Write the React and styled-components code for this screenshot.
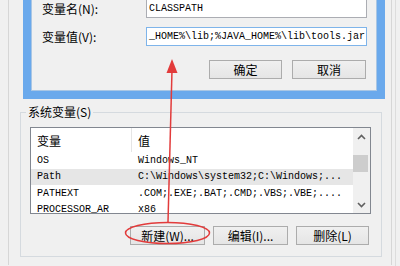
import React from "react";
import styled, { createGlobalStyle } from "styled-components";

const GlobalStyle = createGlobalStyle`
	html, body {
		margin: 0;
		padding: 0;
		background: #f0f0f0;
	}
	body {
		font-family: "Noto Sans CJK SC", "Liberation Sans", sans-serif;
		color: #000;
	}
`;

const Desktop = styled.div`
	position: relative;
	box-sizing: border-box;
	width: 396px;
	height: 266px;
	padding-left: 8px;
	border-right: 1px solid #dcdcdc;
	background: #f0f0f0;
	overflow: hidden;
`;

const EnvWindow = styled.div`
	box-sizing: border-box;
	width: 384px;
	height: 100%;
	border-left: 1px solid #d6d6d6;
	border-right: 1px solid #d6d6d6;
	background: #f0f0f0;
`;

const EditDialog = styled.div`
	box-sizing: border-box;
	width: 362px;
	margin: -1px 0 0 14px;
	border: 8px solid #6aa9ec;
	border-top: none;
	box-shadow: inset 0 0 0 1px #a9c6e4;
	background: #f0f0f0;
	padding: 0 10px 12px 11px;
`;

const FieldGrid = styled.div`
	display: grid;
	grid-template-columns: 104px 1fr;
	row-gap: 9px;
	align-items: center;
`;

const Label = styled.span`
	font-size: 12px;
	line-height: 16px;
	white-space: nowrap;
`;

const TextBox = styled.div`
	box-sizing: border-box;
	height: 19px;
	display: flex;
	align-items: center;
	padding: 0 2px;
	overflow: hidden;
	background: #fff;
	border: 1px solid ${(p) => (p.$focused ? "#7eb4ea" : "#abadb3")};
	font-family: "Liberation Mono", monospace;
	font-size: 10px;
	white-space: nowrap;
`;

const ButtonRow = styled.div`
	display: flex;
	justify-content: flex-end;
	gap: ${(p) => p.$gap || 8}px;
	margin-top: ${(p) => p.$top || 0}px;
	padding-right: ${(p) => p.$right || 0}px;
`;

const Button = styled.button`
	box-sizing: border-box;
	width: ${(p) => p.$w}px;
	height: 19px;
	padding: 0;
	border: 1px solid #acacac;
	background: linear-gradient(#f0f0f0, #e5e5e5);
	font-family: "Noto Sans CJK SC", "Liberation Sans", sans-serif;
	font-size: 12px;
	line-height: 17px;
	color: #000;
	white-space: nowrap;
`;

const GroupBox = styled.fieldset`
	box-sizing: border-box;
	width: 362px;
	margin: 5px 0 0 11px;
	padding: 7px 10px 11px 9px;
	border: 1px solid #d5dadf;
	min-width: 0;
`;

const GroupTitle = styled.legend`
	margin-left: -4px;
	padding: 0 2px;
	font-size: 12px;
	line-height: 16px;
`;

const ListView = styled.div`
	box-sizing: border-box;
	height: 87px;
	display: flex;
	border: 1px solid #828790;
	background: #fff;
	overflow: hidden;
`;

const Table = styled.div`
	flex: 1;
	display: flex;
	flex-direction: column;
`;

const HeaderRow = styled.div`
	display: grid;
	grid-template-columns: 101px 1fr;
	height: 24px;
	flex: none;
	font-size: 12px;
`;

const HeaderCell = styled.div`
	display: flex;
	align-items: center;
	padding-left: 6px;
	border-right: ${(p) => (p.$divider ? "1px solid #e5e5e5" : "none")};
`;

const Row = styled.div`
	display: grid;
	grid-template-columns: 101px 1fr;
	height: 16.5px;
	flex: none;
	align-items: center;
	background: ${(p) => (p.$selected ? "#e6e6e6" : "transparent")};
	font-family: "Liberation Mono", monospace;
	font-size: 10px;
	white-space: nowrap;
	overflow: hidden;
`;

const Cell = styled.span`
	padding-left: 6px;
	overflow: hidden;
`;

const ScrollBar = styled.div`
	width: 17px;
	flex: none;
	display: flex;
	flex-direction: column;
	align-items: center;
	background: #f0f0f0;
`;

const ScrollArrow = styled.div`
	height: 17px;
	width: 17px;
	display: flex;
	align-items: center;
	justify-content: center;
	flex: none;
`;

const ScrollTrack = styled.div`
	flex: 1;
	width: 100%;
	padding-top: 10px;
	box-sizing: border-box;
`;

const Thumb = styled.div`
	width: 15px;
	height: 17px;
	background: #cdcdcd;
`;

const Annotation = styled.svg`
	position: absolute;
	left: 0;
	top: 0;
	pointer-events: none;
`;

const Chevron = ({ down }) => (
	<svg width="9" height="6" viewBox="0 0 9 6">
		<path
			d={down ? "M1 1 L4.5 4.5 L8 1" : "M1 5 L4.5 1.5 L8 5"}
			fill="none"
			stroke="#606060"
			strokeWidth="1.6"
		/>
	</svg>
);

const rows = [
	["OS", "Windows_NT"],
	["Path", "C:\\Windows\\system32;C:\\Windows;..."],
	["PATHEXT", ".COM;.EXE;.BAT;.CMD;.VBS;.VBE;...."],
	["PROCESSOR_AR", "x86"],
];

const App = () => {
	return (
		<>
			<GlobalStyle />
			<Desktop>
				<EnvWindow>
					<EditDialog>
						<FieldGrid>
							<Label>变量名(N):</Label>
							<TextBox>CLASSPATH</TextBox>
							<Label>变量值(V):</Label>
							<TextBox $focused>{"_HOME%\\lib;%JAVA_HOME%\\lib\\tools.jar"}</TextBox>
						</FieldGrid>
						<ButtonRow $gap={10} $top={14} $right={1}>
							<Button $w={73}>确定</Button>
							<Button $w={74}>取消</Button>
						</ButtonRow>
					</EditDialog>

					<GroupBox>
						<GroupTitle>系统变量(S)</GroupTitle>
						<ListView>
							<Table>
								<HeaderRow>
									<HeaderCell $divider>变量</HeaderCell>
									<HeaderCell>值</HeaderCell>
								</HeaderRow>
								{rows.map(([name, value], i) => (
									<Row key={name} $selected={i === 1}>
										<Cell>{name}</Cell>
										<Cell>{value}</Cell>
									</Row>
								))}
							</Table>
							<ScrollBar>
								<ScrollArrow>
									<Chevron />
								</ScrollArrow>
								<ScrollTrack>
									<Thumb />
								</ScrollTrack>
								<ScrollArrow>
									<Chevron down />
								</ScrollArrow>
							</ScrollBar>
						</ListView>
						<ButtonRow $gap={8} $top={12} $right={2}>
							<Button $w={75}>新建(W)...</Button>
							<Button $w={75}>编辑(I)...</Button>
							<Button $w={73}>删除(L)</Button>
						</ButtonRow>
					</GroupBox>
				</EnvWindow>

				<Annotation width="400" height="266" viewBox="0 0 400 266">
					<line x1="172" y1="70" x2="168" y2="222" stroke="#e23b3b" strokeWidth="1.5" />
					<polygon points="172,59 166.5,73 177.5,73" fill="#e23b3b" />
					<ellipse cx="167.5" cy="233" rx="42" ry="10.5" fill="none" stroke="#e23b3b" strokeWidth="1.5" />
				</Annotation>
			</Desktop>
		</>
	);
};

export default App;
